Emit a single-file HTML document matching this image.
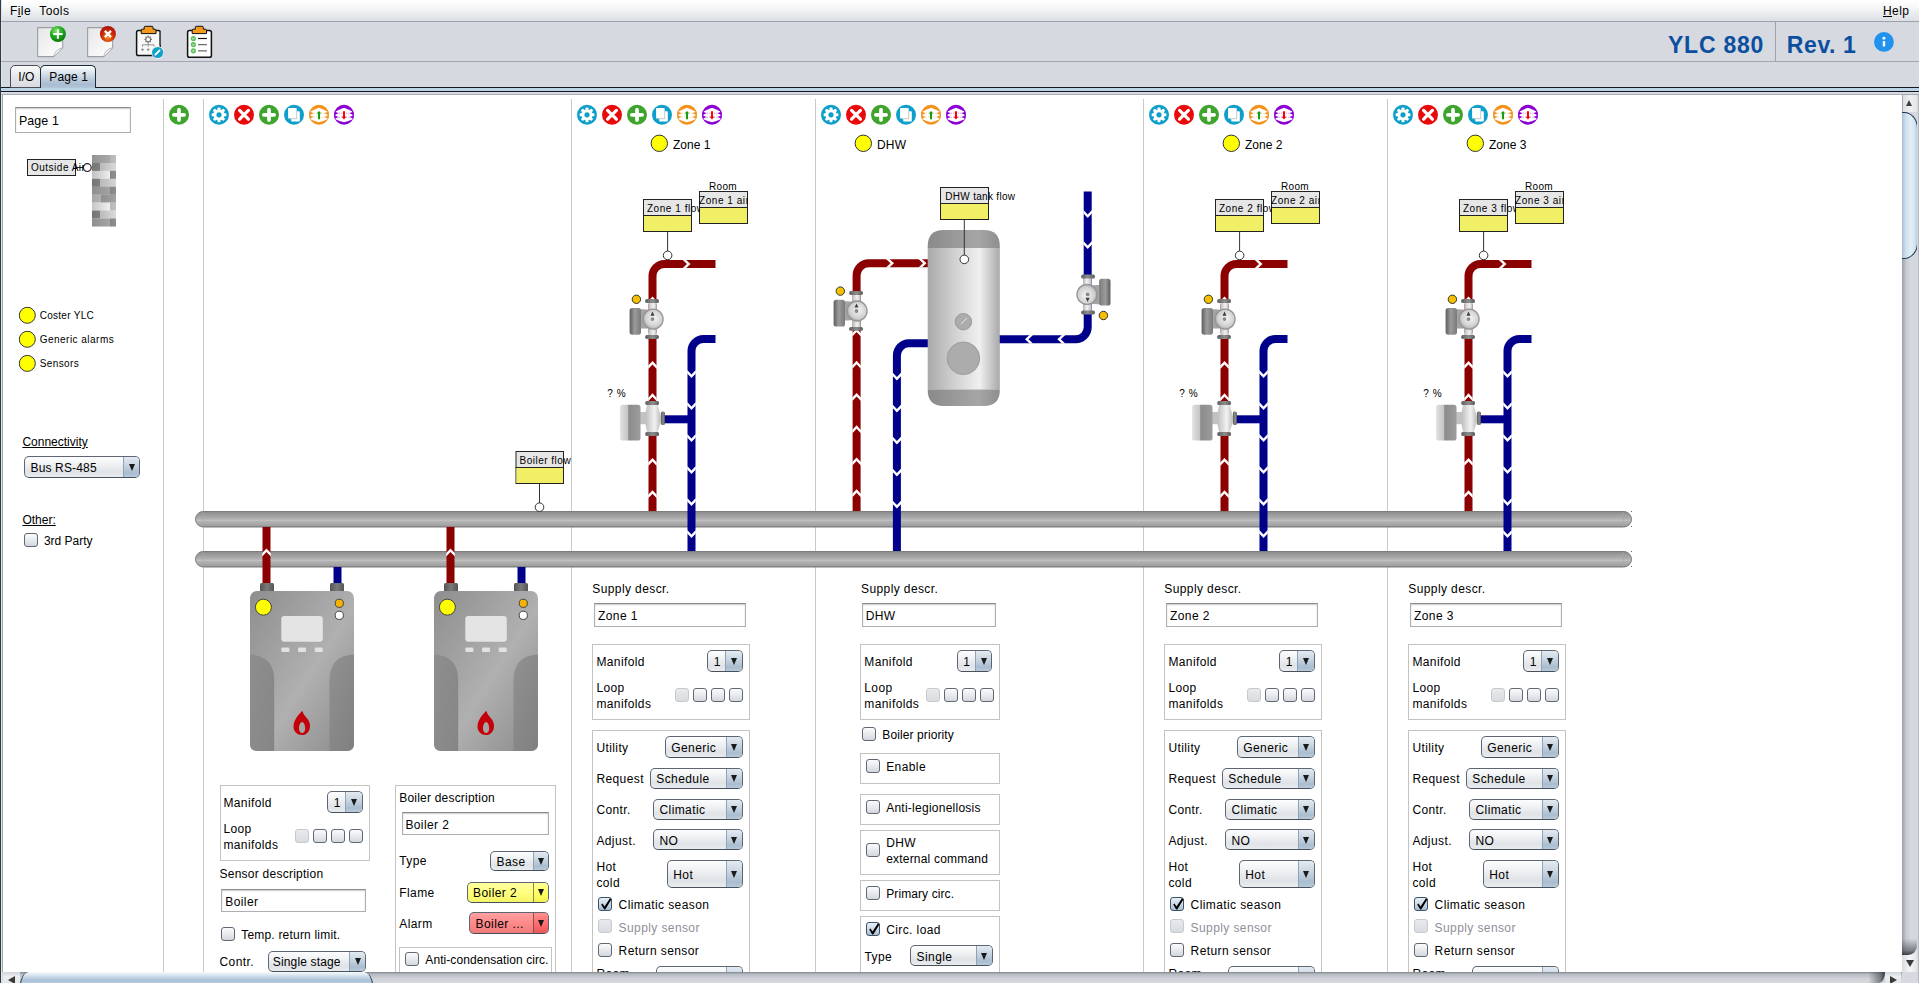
<!DOCTYPE html>
<html><head><meta charset="utf-8"><title>YLC 880</title><style>
*{margin:0;padding:0;box-sizing:border-box}
html,body{width:1919px;height:983px;overflow:hidden;background:#d6d9df;font-family:"Liberation Sans", sans-serif}
.t{position:absolute;white-space:nowrap;font-family:"Liberation Sans", sans-serif}
.clip{position:absolute;overflow:hidden}
.tf{position:absolute;background:#fff;border:1px solid #acaeb2;border-top-color:#8a8c90;box-shadow:inset 0 1px 1.5px rgba(0,0,0,0.22)}
.cb{position:absolute;border:1px solid #5d6672;border-bottom-color:#47505b;border-radius:5px;background:linear-gradient(#fdfdfe,#eef0f2 40%,#dfe2e6 75%,#e9ecef);overflow:hidden}
.cb .ca{position:absolute;top:0;bottom:0;border-left:1px solid #8fa3b8;background:linear-gradient(#e3eaf1,#c9d6e2 40%,#a9bdd0 80%,#b7cadb)}
.cby{background:linear-gradient(#ffffa0,#ffff80 50%,#f4f466)}
.cby .ca{background:linear-gradient(#ffff90,#ffff60 60%,#f0f050);border-left-color:#8a8a50}
.cbr{background:linear-gradient(#ffa0a0,#ff8a8a 50%,#f07a7a)}
.cbr .ca{background:linear-gradient(#ff9090,#ff6868 60%,#e85a5a);border-left-color:#8a5050}
.cb .tri{position:absolute;width:0;height:0;border-left:3.8px solid transparent;border-right:3.8px solid transparent;border-top:7px solid #1a1a1a}
.ck{position:absolute;width:14px;height:14px;border:1.4px solid #5f6873;border-radius:3px;background:linear-gradient(#fafbfc,#e4e7eb 60%,#d3d8de)}
.ckc{background:linear-gradient(#e9eff5,#c7d5e2 60%,#a9bed2);border-color:#3f5368}
.ckd{border-color:#c6cacf;background:linear-gradient(#e8eaed,#d8dbdf)}
.grp{position:absolute;border:1px solid #c3c3c3}
.tab{position:absolute;border:1px solid;border-radius:5px 5px 0 0}
</style></head>
<body>
<div style="position:absolute;left:0;top:0;width:1919px;height:21px;background:linear-gradient(#ffffff 0%,#f6f7f8 35%,#dcdfe4 100%)"></div><div style="position:absolute;left:1px;top:0;width:1px;height:983px;background:#e2e5e9"></div><div style="position:absolute;left:0;top:21px;width:1919px;height:1px;background:#9da2aa"></div><div class="t" style="left:10px;top:5.140000000000001px;font-size:12px;line-height:13.799999999999999px;color:#000;font-weight:normal;letter-spacing:0.4px;">F<u style="text-decoration-thickness:1px;text-underline-offset:1px">i</u>le</div><div class="t" style="left:39.3px;top:5.140000000000001px;font-size:12px;line-height:13.799999999999999px;color:#000;font-weight:normal;letter-spacing:0.4px;">Tools</div><div class="t" style="left:1883px;top:5.440000000000001px;font-size:12px;line-height:13.799999999999999px;color:#000;font-weight:normal;letter-spacing:0.4px;"><u style="text-decoration-thickness:1px;text-underline-offset:1px">H</u>elp</div><div style="position:absolute;left:0;top:61px;width:1919px;height:1px;background:#a3a7af"></div><div style="position:absolute;left:1775px;top:22px;width:1px;height:39px;background:#9ea3ab"></div><div class="t" style="left:1668px;top:31.58px;font-size:23px;line-height:26.45px;color:#0b4f9e;font-weight:bold;letter-spacing:0.75px;">YLC 880</div><div class="t" style="left:1786.8px;top:31.58px;font-size:23px;line-height:26.45px;color:#0b4f9e;font-weight:bold;letter-spacing:0.6px;">Rev. 1</div><svg style="position:absolute;left:1873px;top:32px" width="22" height="22"><circle cx="10.95" cy="9.96" r="9.9" fill="#2193ee"/><circle cx="10.95" cy="6.3" r="1.45" fill="#fff"/><rect x="9.75" y="9.1" width="2.4" height="5.4" fill="#fff"/></svg><svg style="position:absolute;left:30px;top:22px" width="190" height="40">
 <defs>
  <linearGradient id="pg" x1="0" y1="0" x2="1" y2="1"><stop offset="0" stop-color="#e6e6e6"/><stop offset="1" stop-color="#ffffff"/></linearGradient>
  <radialGradient id="gball" cx="0.4" cy="0.3" r="0.7"><stop offset="0" stop-color="#8ce36a"/><stop offset="0.5" stop-color="#24b024"/><stop offset="1" stop-color="#0a7a0a"/></radialGradient>
  <radialGradient id="rball" cx="0.5" cy="0.7" r="0.7"><stop offset="0" stop-color="#f2941a"/><stop offset="0.55" stop-color="#cc2a0a"/><stop offset="1" stop-color="#a80f0f"/></radialGradient>
 </defs>
 <g transform="translate(-30,-22)">
  <path d="M37.6,27.6 H59 L62.7,31 V47.6 L53.8,56.6 H37.6 Z" fill="url(#pg)" stroke="#9c9ea2" stroke-width="1.1" stroke-linejoin="round"/>
  <path d="M53.8,56.6 Q54.5,50 62.7,47.6" fill="#f6f6f6" stroke="#a8a8a8" stroke-width="0.8"/>
  <circle cx="57.9" cy="34" r="8" fill="url(#gball)"/>
  <path d="M53.2,34 H62.6 M57.9,29.3 V38.7" stroke="#fff" stroke-width="2"/>
  <path d="M87.6,27.6 H109 L112.7,31 V47.6 L103.8,56.6 H87.6 Z" fill="url(#pg)" stroke="#9c9ea2" stroke-width="1.1" stroke-linejoin="round"/>
  <path d="M103.8,56.6 Q104.5,50 112.7,47.6" fill="#f6f6f6" stroke="#a8a8a8" stroke-width="0.8"/>
  <circle cx="107.9" cy="34" r="8" fill="url(#rball)"/>
  <path d="M104.8,30.9 L111,37.1 M111,30.9 L104.8,37.1" stroke="#fff" stroke-width="2.2"/>
  <rect x="136.6" y="30.6" width="23.6" height="25" rx="1.8" fill="#f8f8f8" stroke="#111" stroke-width="1.5"/>
  <path d="M160.2,31.5 V45" stroke="#555" stroke-width="1.5"/>
  <path d="M141.2,33.6 V30.2 Q141.2,29.2 142.2,29.2 H144.2 V27.2 Q144.2,26.3 145.2,26.3 H152 Q153,26.3 153,27.2 V29.2 H155 Q156,29.2 156,30.2 V33.6 Z" fill="#f39a1e" stroke="#111" stroke-width="1"/>
  <g transform="translate(148.2,39.4)">
   <circle r="2.9" fill="#777"/>
   <path d="M0,-3.8 V3.8 M-3.8,0 H3.8 M-2.7,-2.7 L2.7,2.7 M2.7,-2.7 L-2.7,2.7" stroke="#777" stroke-width="1.1"/>
   <circle r="1.8" fill="#fff"/>
  </g>
  <path d="M148.2,42.6 V46.6 M142.5,46.8 V44.8 H154 V46.6" stroke="#888" stroke-width="0.9" fill="none"/>
  <circle cx="142.5" cy="49.6" r="1.2" fill="#888"/><circle cx="148.2" cy="49.6" r="1.2" fill="#888"/>
  <circle cx="157.6" cy="52.5" r="6.4" fill="#f4f4f4" opacity="0.85"/>
  <circle cx="157.6" cy="52.5" r="5.6" fill="#12a0cc"/>
  <path d="M155.4,54.7 L159.6,50.4" stroke="#fff" stroke-width="1.8" stroke-linecap="round"/>
  <rect x="187.6" y="30.6" width="23.8" height="26.6" rx="1.8" fill="#fff" stroke="#111" stroke-width="1.5"/>
  <path d="M192.2,33.6 V30.2 Q192.2,29.2 193.2,29.2 H195.3 V27.2 Q195.3,26.3 196.3,26.3 H202.3 Q203.3,26.3 203.3,27.2 V29.2 H205.5 Q206.5,29.2 206.5,30.2 V33.6 Z" fill="#f39a1e" stroke="#111" stroke-width="1"/>
  <circle cx="193.4" cy="38.5" r="2.6" fill="#5cbf5c"/><circle cx="193.4" cy="44.6" r="2.6" fill="#5cbf5c"/><circle cx="193.4" cy="50.8" r="2.6" fill="#5cbf5c"/>
  <path d="M192.3,38.2 L193.2,39.4 L194.6,37.6 M192.3,44.3 L193.2,45.5 L194.6,43.7 M192.3,50.5 L193.2,51.7 L194.6,49.9" stroke="#fff" stroke-width="0.7" fill="none"/>
  <path d="M198,38.5 H206.9" stroke="#111" stroke-width="1.2"/>
  <path d="M198,44.6 H206.9 M198,50.8 H206.9" stroke="#6a6a6a" stroke-width="1.2"/>
 </g>
</svg><div style="position:absolute;left:0;top:87px;width:1919px;height:1px;background:#111a22"></div><div style="position:absolute;left:0;top:88px;width:1919px;height:3px;background:#bcd2e6"></div><div style="position:absolute;left:0;top:91px;width:1919px;height:1px;background:#0f1720"></div><div style="position:absolute;left:0;top:94px;width:1919px;height:1px;background:#a9adb5"></div><div class="tab" style="left:10px;top:65px;width:31px;height:23px;border-color:#4a4f55;background:linear-gradient(#fbfbfc,#e6e7ea 50%,#d9dbdf)"></div><div class="tab" style="left:40px;top:65px;width:56px;height:23px;border-color:#1c2c3c;border-bottom:none;background:linear-gradient(#ffffff,#e2e9f0 25%,#bccbdb 60%,#a9bcd0 85%,#b2c7db)"></div><div class="t" style="left:18.3px;top:70.94px;font-size:12px;line-height:13.799999999999999px;color:#000;font-weight:normal;letter-spacing:0px;">I/O</div><div class="t" style="left:49.3px;top:70.94px;font-size:12px;line-height:13.799999999999999px;color:#000;font-weight:normal;letter-spacing:0.1px;">Page 1</div><div style="position:absolute;left:2px;top:95px;width:1900px;height:877px;background:#fff"></div><div style="position:absolute;left:2px;top:95px;width:1px;height:877px;background:#a2a8b0"></div>
<div id="content" style="position:absolute;left:0;top:0;width:1919px;height:983px;clip-path:inset(95px 17px 11px 3px)">
<svg style="position:absolute;left:0;top:0" width="1919" height="983" viewBox="0 0 1919 983">

<defs>
 <linearGradient id="manif" x1="0" y1="0" x2="0" y2="1">
  <stop offset="0" stop-color="#8a8a8a"/><stop offset="0.15" stop-color="#979797"/>
  <stop offset="0.5" stop-color="#b2b2b2"/><stop offset="0.56" stop-color="#c6c6c6"/>
  <stop offset="0.62" stop-color="#b4b4b4"/><stop offset="0.9" stop-color="#a2a2a2"/><stop offset="1" stop-color="#808080"/>
 </linearGradient>
 <linearGradient id="tankg" x1="0" y1="0" x2="1" y2="0">
  <stop offset="0" stop-color="#a9a9a9"/><stop offset="0.35" stop-color="#cfcfcf"/>
  <stop offset="0.72" stop-color="#f0f0f0"/><stop offset="1" stop-color="#a8a8a8"/>
 </linearGradient>
 <linearGradient id="tankcap" x1="0" y1="0" x2="1" y2="0">
  <stop offset="0" stop-color="#8a8a8a"/><stop offset="0.7" stop-color="#a6a6a6"/><stop offset="1" stop-color="#8e8e8e"/>
 </linearGradient>
 <linearGradient id="boilg" x1="0" y1="0" x2="1" y2="1">
  <stop offset="0" stop-color="#8e8e8e"/><stop offset="0.55" stop-color="#b0b0b0"/><stop offset="1" stop-color="#8a8a8a"/>
 </linearGradient>
 <linearGradient id="boilside" x1="0" y1="0" x2="1" y2="1">
  <stop offset="0" stop-color="#8c8c8c"/><stop offset="1" stop-color="#7e7e7e"/>
 </linearGradient>
 <linearGradient id="conn" x1="0" y1="0" x2="1" y2="0">
  <stop offset="0" stop-color="#555"/><stop offset="0.5" stop-color="#7a7a7a"/><stop offset="1" stop-color="#555"/>
 </linearGradient>
 <linearGradient id="pumpbody" x1="0" y1="0" x2="1" y2="0">
  <stop offset="0" stop-color="#bdbdbd"/><stop offset="0.6" stop-color="#f2f2f2"/><stop offset="1" stop-color="#bcbcbc"/>
 </linearGradient>
 <radialGradient id="pumpcirc" cx="0.55" cy="0.45" r="0.6">
  <stop offset="0" stop-color="#f4f4f4"/><stop offset="0.7" stop-color="#d0d0d0"/><stop offset="1" stop-color="#9a9a9a"/>
 </radialGradient>
 <linearGradient id="motor" x1="0" y1="0" x2="1" y2="0">
  <stop offset="0" stop-color="#5e5e5e"/><stop offset="0.45" stop-color="#9c9c9c"/><stop offset="1" stop-color="#7a7a7a"/>
 </linearGradient>
 <linearGradient id="flange" x1="0" y1="0" x2="1" y2="0">
  <stop offset="0" stop-color="#5e5e5e"/><stop offset="0.55" stop-color="#8e8e8e"/><stop offset="1" stop-color="#5a5a5a"/>
 </linearGradient>
 <linearGradient id="vmotor" x1="0" y1="0" x2="1" y2="0">
  <stop offset="0" stop-color="#e2e2e2"/><stop offset="0.38" stop-color="#c4c4c4"/><stop offset="0.42" stop-color="#8c8c8c"/><stop offset="1" stop-color="#9c9c9c"/>
 </linearGradient>
 <g id="ic-gear">
  <circle r="10" fill="#0d9fc9"/>
  <g fill="#fff">
   <circle r="5.6"/>
   <rect x="-1.5" y="-7.4" width="3" height="3.2" rx="0.8"/>
   <rect x="-1.5" y="4.2" width="3" height="3.2" rx="0.8"/>
   <rect x="-7.4" y="-1.5" width="3.2" height="3" rx="0.8"/>
   <rect x="4.2" y="-1.5" width="3.2" height="3" rx="0.8"/>
   <g transform="rotate(45)">
    <rect x="-1.5" y="-7.4" width="3" height="3.2" rx="0.8"/>
    <rect x="-1.5" y="4.2" width="3" height="3.2" rx="0.8"/>
    <rect x="-7.4" y="-1.5" width="3.2" height="3" rx="0.8"/>
    <rect x="4.2" y="-1.5" width="3.2" height="3" rx="0.8"/>
   </g>
  </g>
  <circle r="2.6" fill="#0d9fc9"/>
 </g>
 <g id="ic-x">
  <circle r="10" fill="#e90b0b"/>
  <path d="M-4.4,-4.4 L4.4,4.4 M4.4,-4.4 L-4.4,4.4" stroke="#fff" stroke-width="3.2" stroke-linecap="round"/>
 </g>
 <g id="ic-plus">
  <circle r="10" fill="#3ea42b"/>
  <path d="M-5.1,0 H5.1 M0,-5.1 V5.1" stroke="#fff" stroke-width="3.7" stroke-linecap="round"/>
 </g>
 <g id="ic-copy">
  <circle r="10" fill="#0d9fc9"/>
  <rect x="-2.8" y="-3.6" width="8.6" height="10.4" rx="0.8" fill="#fff"/>
  <rect x="-5.9" y="-6.7" width="8.6" height="10.5" rx="0.6" fill="#fff"/>
  <path d="M2.7,-4 V3.8 H-4" stroke="#cfcfcf" stroke-width="1.2" fill="none"/>
 </g>
 <g id="ic-lay">
  <path d="M-8.3,-3.4 Q-4.5,-5.6 0,-7.1 Q4.5,-5.6 8.3,-3.4 L8.6,4.4 Q4.5,6.4 0,7.4 Q-4.5,6.4 -8.6,4.4 Z" fill="#fff"/>
 </g>
 <g id="ic-up">
  <circle r="10" fill="#f39118"/>
  <use href="#ic-lay"/>
  <path d="M-9.5,-3.4 L-5.3,-1.6 L-9.5,0.2 Z M9.5,-3.4 L5.3,-1.6 L9.5,0.2 Z M-9.5,0.6 L-5.3,2.3 L-9.5,4 Z M9.5,0.6 L5.3,2.3 L9.5,4 Z" fill="#f39118"/>
  <path d="M-5.3,-1.6 H5.3 M-5.3,2.3 H5.3" stroke="#f39118" stroke-width="0.7" stroke-dasharray="1.2 1.2" opacity="0.6"/>
  <path d="M0,-3.8 L-2.3,-1.2 H-1 V4.4 H1 V-1.2 H2.3 Z" fill="#12a012"/>
 </g>
 <g id="ic-down">
  <circle r="10" fill="#8b00d3"/>
  <use href="#ic-lay"/>
  <path d="M-9.5,-3.4 L-5.3,-1.6 L-9.5,0.2 Z M9.5,-3.4 L5.3,-1.6 L9.5,0.2 Z M-9.5,0.6 L-5.3,2.3 L-9.5,4 Z M9.5,0.6 L5.3,2.3 L9.5,4 Z" fill="#8b00d3"/>
  <path d="M-5.3,-1.6 H5.3 M-5.3,2.3 H5.3" stroke="#8b00d3" stroke-width="0.7" stroke-dasharray="1.2 1.2" opacity="0.6"/>
  <path d="M0,4.6 L-2.3,1.9 H-1 V-3.6 H1 V1.9 H2.3 Z" fill="#f00"/>
 </g>
</defs>

<rect x="163" y="99" width="1" height="880" fill="#c9c9c9"/><rect x="203" y="99" width="1" height="880" fill="#c9c9c9"/><rect x="571" y="99" width="1" height="880" fill="#c9c9c9"/><rect x="815" y="99" width="1" height="880" fill="#c9c9c9"/><rect x="1143" y="99" width="1" height="880" fill="#c9c9c9"/><rect x="1387" y="99" width="1" height="880" fill="#c9c9c9"/><use href="#ic-plus" x="179" y="114.8"/><use href="#ic-gear" x="219" y="114.8"/><use href="#ic-x" x="244" y="114.8"/><use href="#ic-plus" x="269" y="114.8"/><use href="#ic-copy" x="294" y="114.8"/><use href="#ic-up" x="319" y="114.8"/><use href="#ic-down" x="344" y="114.8"/><use href="#ic-gear" x="587" y="114.8"/><use href="#ic-x" x="612" y="114.8"/><use href="#ic-plus" x="637" y="114.8"/><use href="#ic-copy" x="662" y="114.8"/><use href="#ic-up" x="687" y="114.8"/><use href="#ic-down" x="712" y="114.8"/><use href="#ic-gear" x="831" y="114.8"/><use href="#ic-x" x="856" y="114.8"/><use href="#ic-plus" x="881" y="114.8"/><use href="#ic-copy" x="906" y="114.8"/><use href="#ic-up" x="931" y="114.8"/><use href="#ic-down" x="956" y="114.8"/><use href="#ic-gear" x="1159" y="114.8"/><use href="#ic-x" x="1184" y="114.8"/><use href="#ic-plus" x="1209" y="114.8"/><use href="#ic-copy" x="1234" y="114.8"/><use href="#ic-up" x="1259" y="114.8"/><use href="#ic-down" x="1284" y="114.8"/><use href="#ic-gear" x="1403" y="114.8"/><use href="#ic-x" x="1428" y="114.8"/><use href="#ic-plus" x="1453" y="114.8"/><use href="#ic-copy" x="1478" y="114.8"/><use href="#ic-up" x="1503" y="114.8"/><use href="#ic-down" x="1528" y="114.8"/><rect x="195.5" y="511.5" width="1436" height="15.5" rx="7.75" fill="url(#manif)" stroke="#7c7c7c" stroke-width="1"/><line x1="203.5" y1="512" x2="203.5" y2="526.5" stroke="#a6a6a6" stroke-width="1" opacity="0.6"/><line x1="1623.5" y1="512" x2="1623.5" y2="526.5" stroke="#a6a6a6" stroke-width="1" opacity="0.6"/><rect x="1631" y="511" width="1" height="1" fill="#666"/><rect x="1631" y="526" width="1" height="1" fill="#666"/><rect x="195.5" y="551.5" width="1436" height="15.5" rx="7.75" fill="url(#manif)" stroke="#7c7c7c" stroke-width="1"/><line x1="203.5" y1="552" x2="203.5" y2="566.5" stroke="#a6a6a6" stroke-width="1" opacity="0.6"/><line x1="1623.5" y1="552" x2="1623.5" y2="566.5" stroke="#a6a6a6" stroke-width="1" opacity="0.6"/><rect x="1631" y="551" width="1" height="1" fill="#666"/><rect x="1631" y="566" width="1" height="1" fill="#666"/><circle cx="659.3" cy="143.3" r="8.2" fill="#ffff00" stroke="#333" stroke-width="1"/><rect x="643.5" y="199.5" width="48" height="32" fill="#e6e6e6" stroke="#222" stroke-width="1"/><rect x="644" y="216" width="47" height="15" fill="#f0ef66"/><line x1="643" y1="215.5" x2="692" y2="215.5" stroke="#222" stroke-width="1"/><rect x="699.5" y="191.5" width="48" height="32" fill="#e6e6e6" stroke="#222" stroke-width="1"/><rect x="700" y="208" width="47" height="15" fill="#f0ef66"/><line x1="699" y1="207.5" x2="748" y2="207.5" stroke="#222" stroke-width="1"/><line x1="667.6" y1="231" x2="667.6" y2="251" stroke="#333" stroke-width="1"/><path d="M652.5,511 V276 A12,12 0 0 1 664.5,264 H715.5" stroke="#8b0000" stroke-width="8" fill="none" stroke-linejoin="round"/><path d="M648.2,301.0 L652.5,296.4 L656.8,301.0 L656.8,304.4 L652.5,299.9 L648.2,304.4 Z" fill="#fff"/><path d="M648.2,333.3 L652.5,328.7 L656.8,333.3 L656.8,336.7 L652.5,332.2 L648.2,336.7 Z" fill="#fff"/><path d="M648.2,365.6 L652.5,361 L656.8,365.6 L656.8,369 L652.5,364.5 L648.2,369 Z" fill="#fff"/><path d="M648.2,397.90000000000003 L652.5,393.3 L656.8,397.90000000000003 L656.8,401.3 L652.5,396.8 L648.2,401.3 Z" fill="#fff"/><path d="M648.2,430.20000000000005 L652.5,425.6 L656.8,430.20000000000005 L656.8,433.6 L652.5,429.1 L648.2,433.6 Z" fill="#fff"/><path d="M648.2,462.5 L652.5,457.9 L656.8,462.5 L656.8,465.9 L652.5,461.4 L648.2,465.9 Z" fill="#fff"/><path d="M648.2,494.8 L652.5,490.2 L656.8,494.8 L656.8,498.2 L652.5,493.7 L648.2,498.2 Z" fill="#fff"/><path d="M685.9,259.7 L690.5,264 L685.9,268.3 L682.5,268.3 L687.0,264 L682.5,259.7 Z" fill="#fff"/><circle cx="667.6" cy="255.4" r="4.3" fill="#fff" stroke="#333" stroke-width="1"/><path d="M691.5,551 V351 A12,12 0 0 1 703.5,339 H715.5" stroke="#00008b" stroke-width="8" fill="none" stroke-linejoin="round"/><path d="M664,419.3 H691.5" stroke="#00008b" stroke-width="8" fill="none" stroke-linejoin="round"/><path d="M687.2,373.4 L691.5,378 L695.8,373.4 L695.8,370 L691.5,374.5 L687.2,370 Z" fill="#fff"/><path d="M687.2,405.4 L691.5,410 L695.8,405.4 L695.8,402 L691.5,406.5 L687.2,402 Z" fill="#fff"/><path d="M687.2,437.4 L691.5,442 L695.8,437.4 L695.8,434 L691.5,438.5 L687.2,434 Z" fill="#fff"/><path d="M687.2,469.4 L691.5,474 L695.8,469.4 L695.8,466 L691.5,470.5 L687.2,466 Z" fill="#fff"/><path d="M687.2,501.4 L691.5,506 L695.8,501.4 L695.8,498 L691.5,502.5 L687.2,498 Z" fill="#fff"/><path d="M687.2,533.4 L691.5,538 L695.8,533.4 L695.8,530 L691.5,534.5 L687.2,530 Z" fill="#fff"/><g transform="translate(652.5,318.9)"><rect x="-4" y="-17" width="8" height="34" fill="url(#pumpbody)"/><rect x="-7.3" y="-19.8" width="13.7" height="3.9" rx="1.6" fill="url(#flange)"/><rect x="-7.3" y="16.1" width="13.7" height="3.9" rx="1.6" fill="url(#flange)"/><path d="M-12,-9.6 Q-6,-9.8 -3,-9 L-3,9 Q-6,9.8 -12,9.6 Z" fill="#a4a4a4"/><rect x="-22.9" y="-11" width="11.4" height="26.8" rx="2.6" fill="url(#motor)"/><circle cx="0.6" cy="0.2" r="10" fill="url(#pumpcirc)" stroke="#959595" stroke-width="1.3"/><path d="M-2,-3.2 L2,-3.2 L0,-7.4 Z" fill="#3c3c3c"/><circle cx="0" cy="0.2" r="1.9" fill="#8a8a8a"/></g><circle cx="636.4" cy="299.3" r="4.2" fill="#f6c000" stroke="#333" stroke-width="1"/><g transform="translate(652.5,419.3)"><rect x="-12.5" y="-7.3" width="7" height="12.2" fill="#c2c2c2"/><path d="M-5.4,-14.4 L5.3,-14.4 L8.3,-3 L8.3,2.5 L5.3,12.8 L-5.4,12.8 L-7.3,3.8 L-7.3,-5 Z" fill="url(#pumpbody)"/><rect x="-7.2" y="-18.2" width="13.7" height="3.8" rx="1.5" fill="url(#flange)"/><rect x="-7.2" y="12.8" width="13.7" height="3.8" rx="1.5" fill="url(#flange)"/><rect x="8.4" y="-7.8" width="4" height="13.5" rx="1.5" fill="url(#flange)"/><rect x="-32.4" y="-14.6" width="20.4" height="35.8" rx="2.6" fill="url(#vmotor)"/></g><circle cx="1231.3" cy="143.3" r="8.2" fill="#ffff00" stroke="#333" stroke-width="1"/><rect x="1215.5" y="199.5" width="48" height="32" fill="#e6e6e6" stroke="#222" stroke-width="1"/><rect x="1216" y="216" width="47" height="15" fill="#f0ef66"/><line x1="1215" y1="215.5" x2="1264" y2="215.5" stroke="#222" stroke-width="1"/><rect x="1271.5" y="191.5" width="48" height="32" fill="#e6e6e6" stroke="#222" stroke-width="1"/><rect x="1272" y="208" width="47" height="15" fill="#f0ef66"/><line x1="1271" y1="207.5" x2="1320" y2="207.5" stroke="#222" stroke-width="1"/><line x1="1239.6" y1="231" x2="1239.6" y2="251" stroke="#333" stroke-width="1"/><path d="M1224.5,511 V276 A12,12 0 0 1 1236.5,264 H1287.5" stroke="#8b0000" stroke-width="8" fill="none" stroke-linejoin="round"/><path d="M1220.2,301.0 L1224.5,296.4 L1228.8,301.0 L1228.8,304.4 L1224.5,299.9 L1220.2,304.4 Z" fill="#fff"/><path d="M1220.2,333.3 L1224.5,328.7 L1228.8,333.3 L1228.8,336.7 L1224.5,332.2 L1220.2,336.7 Z" fill="#fff"/><path d="M1220.2,365.6 L1224.5,361 L1228.8,365.6 L1228.8,369 L1224.5,364.5 L1220.2,369 Z" fill="#fff"/><path d="M1220.2,397.90000000000003 L1224.5,393.3 L1228.8,397.90000000000003 L1228.8,401.3 L1224.5,396.8 L1220.2,401.3 Z" fill="#fff"/><path d="M1220.2,430.20000000000005 L1224.5,425.6 L1228.8,430.20000000000005 L1228.8,433.6 L1224.5,429.1 L1220.2,433.6 Z" fill="#fff"/><path d="M1220.2,462.5 L1224.5,457.9 L1228.8,462.5 L1228.8,465.9 L1224.5,461.4 L1220.2,465.9 Z" fill="#fff"/><path d="M1220.2,494.8 L1224.5,490.2 L1228.8,494.8 L1228.8,498.2 L1224.5,493.7 L1220.2,498.2 Z" fill="#fff"/><path d="M1257.9,259.7 L1262.5,264 L1257.9,268.3 L1254.5,268.3 L1259.0,264 L1254.5,259.7 Z" fill="#fff"/><circle cx="1239.6" cy="255.4" r="4.3" fill="#fff" stroke="#333" stroke-width="1"/><path d="M1263.5,551 V351 A12,12 0 0 1 1275.5,339 H1287.5" stroke="#00008b" stroke-width="8" fill="none" stroke-linejoin="round"/><path d="M1236,419.3 H1263.5" stroke="#00008b" stroke-width="8" fill="none" stroke-linejoin="round"/><path d="M1259.2,373.4 L1263.5,378 L1267.8,373.4 L1267.8,370 L1263.5,374.5 L1259.2,370 Z" fill="#fff"/><path d="M1259.2,405.4 L1263.5,410 L1267.8,405.4 L1267.8,402 L1263.5,406.5 L1259.2,402 Z" fill="#fff"/><path d="M1259.2,437.4 L1263.5,442 L1267.8,437.4 L1267.8,434 L1263.5,438.5 L1259.2,434 Z" fill="#fff"/><path d="M1259.2,469.4 L1263.5,474 L1267.8,469.4 L1267.8,466 L1263.5,470.5 L1259.2,466 Z" fill="#fff"/><path d="M1259.2,501.4 L1263.5,506 L1267.8,501.4 L1267.8,498 L1263.5,502.5 L1259.2,498 Z" fill="#fff"/><path d="M1259.2,533.4 L1263.5,538 L1267.8,533.4 L1267.8,530 L1263.5,534.5 L1259.2,530 Z" fill="#fff"/><g transform="translate(1224.5,318.9)"><rect x="-4" y="-17" width="8" height="34" fill="url(#pumpbody)"/><rect x="-7.3" y="-19.8" width="13.7" height="3.9" rx="1.6" fill="url(#flange)"/><rect x="-7.3" y="16.1" width="13.7" height="3.9" rx="1.6" fill="url(#flange)"/><path d="M-12,-9.6 Q-6,-9.8 -3,-9 L-3,9 Q-6,9.8 -12,9.6 Z" fill="#a4a4a4"/><rect x="-22.9" y="-11" width="11.4" height="26.8" rx="2.6" fill="url(#motor)"/><circle cx="0.6" cy="0.2" r="10" fill="url(#pumpcirc)" stroke="#959595" stroke-width="1.3"/><path d="M-2,-3.2 L2,-3.2 L0,-7.4 Z" fill="#3c3c3c"/><circle cx="0" cy="0.2" r="1.9" fill="#8a8a8a"/></g><circle cx="1208.4" cy="299.3" r="4.2" fill="#f6c000" stroke="#333" stroke-width="1"/><g transform="translate(1224.5,419.3)"><rect x="-12.5" y="-7.3" width="7" height="12.2" fill="#c2c2c2"/><path d="M-5.4,-14.4 L5.3,-14.4 L8.3,-3 L8.3,2.5 L5.3,12.8 L-5.4,12.8 L-7.3,3.8 L-7.3,-5 Z" fill="url(#pumpbody)"/><rect x="-7.2" y="-18.2" width="13.7" height="3.8" rx="1.5" fill="url(#flange)"/><rect x="-7.2" y="12.8" width="13.7" height="3.8" rx="1.5" fill="url(#flange)"/><rect x="8.4" y="-7.8" width="4" height="13.5" rx="1.5" fill="url(#flange)"/><rect x="-32.4" y="-14.6" width="20.4" height="35.8" rx="2.6" fill="url(#vmotor)"/></g><circle cx="1475.3" cy="143.3" r="8.2" fill="#ffff00" stroke="#333" stroke-width="1"/><rect x="1459.5" y="199.5" width="48" height="32" fill="#e6e6e6" stroke="#222" stroke-width="1"/><rect x="1460" y="216" width="47" height="15" fill="#f0ef66"/><line x1="1459" y1="215.5" x2="1508" y2="215.5" stroke="#222" stroke-width="1"/><rect x="1515.5" y="191.5" width="48" height="32" fill="#e6e6e6" stroke="#222" stroke-width="1"/><rect x="1516" y="208" width="47" height="15" fill="#f0ef66"/><line x1="1515" y1="207.5" x2="1564" y2="207.5" stroke="#222" stroke-width="1"/><line x1="1483.6" y1="231" x2="1483.6" y2="251" stroke="#333" stroke-width="1"/><path d="M1468.5,511 V276 A12,12 0 0 1 1480.5,264 H1531.5" stroke="#8b0000" stroke-width="8" fill="none" stroke-linejoin="round"/><path d="M1464.2,301.0 L1468.5,296.4 L1472.8,301.0 L1472.8,304.4 L1468.5,299.9 L1464.2,304.4 Z" fill="#fff"/><path d="M1464.2,333.3 L1468.5,328.7 L1472.8,333.3 L1472.8,336.7 L1468.5,332.2 L1464.2,336.7 Z" fill="#fff"/><path d="M1464.2,365.6 L1468.5,361 L1472.8,365.6 L1472.8,369 L1468.5,364.5 L1464.2,369 Z" fill="#fff"/><path d="M1464.2,397.90000000000003 L1468.5,393.3 L1472.8,397.90000000000003 L1472.8,401.3 L1468.5,396.8 L1464.2,401.3 Z" fill="#fff"/><path d="M1464.2,430.20000000000005 L1468.5,425.6 L1472.8,430.20000000000005 L1472.8,433.6 L1468.5,429.1 L1464.2,433.6 Z" fill="#fff"/><path d="M1464.2,462.5 L1468.5,457.9 L1472.8,462.5 L1472.8,465.9 L1468.5,461.4 L1464.2,465.9 Z" fill="#fff"/><path d="M1464.2,494.8 L1468.5,490.2 L1472.8,494.8 L1472.8,498.2 L1468.5,493.7 L1464.2,498.2 Z" fill="#fff"/><path d="M1501.9,259.7 L1506.5,264 L1501.9,268.3 L1498.5,268.3 L1503.0,264 L1498.5,259.7 Z" fill="#fff"/><circle cx="1483.6" cy="255.4" r="4.3" fill="#fff" stroke="#333" stroke-width="1"/><path d="M1507.5,551 V351 A12,12 0 0 1 1519.5,339 H1531.5" stroke="#00008b" stroke-width="8" fill="none" stroke-linejoin="round"/><path d="M1480,419.3 H1507.5" stroke="#00008b" stroke-width="8" fill="none" stroke-linejoin="round"/><path d="M1503.2,373.4 L1507.5,378 L1511.8,373.4 L1511.8,370 L1507.5,374.5 L1503.2,370 Z" fill="#fff"/><path d="M1503.2,405.4 L1507.5,410 L1511.8,405.4 L1511.8,402 L1507.5,406.5 L1503.2,402 Z" fill="#fff"/><path d="M1503.2,437.4 L1507.5,442 L1511.8,437.4 L1511.8,434 L1507.5,438.5 L1503.2,434 Z" fill="#fff"/><path d="M1503.2,469.4 L1507.5,474 L1511.8,469.4 L1511.8,466 L1507.5,470.5 L1503.2,466 Z" fill="#fff"/><path d="M1503.2,501.4 L1507.5,506 L1511.8,501.4 L1511.8,498 L1507.5,502.5 L1503.2,498 Z" fill="#fff"/><path d="M1503.2,533.4 L1507.5,538 L1511.8,533.4 L1511.8,530 L1507.5,534.5 L1503.2,530 Z" fill="#fff"/><g transform="translate(1468.5,318.9)"><rect x="-4" y="-17" width="8" height="34" fill="url(#pumpbody)"/><rect x="-7.3" y="-19.8" width="13.7" height="3.9" rx="1.6" fill="url(#flange)"/><rect x="-7.3" y="16.1" width="13.7" height="3.9" rx="1.6" fill="url(#flange)"/><path d="M-12,-9.6 Q-6,-9.8 -3,-9 L-3,9 Q-6,9.8 -12,9.6 Z" fill="#a4a4a4"/><rect x="-22.9" y="-11" width="11.4" height="26.8" rx="2.6" fill="url(#motor)"/><circle cx="0.6" cy="0.2" r="10" fill="url(#pumpcirc)" stroke="#959595" stroke-width="1.3"/><path d="M-2,-3.2 L2,-3.2 L0,-7.4 Z" fill="#3c3c3c"/><circle cx="0" cy="0.2" r="1.9" fill="#8a8a8a"/></g><circle cx="1452.4" cy="299.3" r="4.2" fill="#f6c000" stroke="#333" stroke-width="1"/><g transform="translate(1468.5,419.3)"><rect x="-12.5" y="-7.3" width="7" height="12.2" fill="#c2c2c2"/><path d="M-5.4,-14.4 L5.3,-14.4 L8.3,-3 L8.3,2.5 L5.3,12.8 L-5.4,12.8 L-7.3,3.8 L-7.3,-5 Z" fill="url(#pumpbody)"/><rect x="-7.2" y="-18.2" width="13.7" height="3.8" rx="1.5" fill="url(#flange)"/><rect x="-7.2" y="12.8" width="13.7" height="3.8" rx="1.5" fill="url(#flange)"/><rect x="8.4" y="-7.8" width="4" height="13.5" rx="1.5" fill="url(#flange)"/><rect x="-32.4" y="-14.6" width="20.4" height="35.8" rx="2.6" fill="url(#vmotor)"/></g><circle cx="863.3" cy="143.3" r="8.2" fill="#ffff00" stroke="#333" stroke-width="1"/><path d="M856.6,511 V275.3 A12,12 0 0 1 868.6,263.3 H928" stroke="#8b0000" stroke-width="8" fill="none" stroke-linejoin="round"/><path d="M852.3000000000001,333.20000000000005 L856.6,328.6 L860.9,333.20000000000005 L860.9,336.6 L856.6,332.1 L852.3000000000001,336.6 Z" fill="#fff"/><path d="M852.3000000000001,365.40000000000003 L856.6,360.8 L860.9,365.40000000000003 L860.9,368.8 L856.6,364.3 L852.3000000000001,368.8 Z" fill="#fff"/><path d="M852.3000000000001,397.6 L856.6,393 L860.9,397.6 L860.9,401 L856.6,396.5 L852.3000000000001,401 Z" fill="#fff"/><path d="M852.3000000000001,429.90000000000003 L856.6,425.3 L860.9,429.90000000000003 L860.9,433.3 L856.6,428.8 L852.3000000000001,433.3 Z" fill="#fff"/><path d="M852.3000000000001,462.1 L856.6,457.5 L860.9,462.1 L860.9,465.5 L856.6,461.0 L852.3000000000001,465.5 Z" fill="#fff"/><path d="M852.3000000000001,493.8 L856.6,489.2 L860.9,493.8 L860.9,497.2 L856.6,492.7 L852.3000000000001,497.2 Z" fill="#fff"/><path d="M889.4,259.0 L894,263.3 L889.4,267.6 L886,267.6 L890.5,263.3 L886,259.0 Z" fill="#fff"/><path d="M921.9,259.0 L926.5,263.3 L921.9,267.6 L918.5,267.6 L923.0,263.3 L918.5,259.0 Z" fill="#fff"/><path d="M896.9,551 V355.3 A12,12 0 0 1 908.9,343.3 H928" stroke="#00008b" stroke-width="8" fill="none" stroke-linejoin="round"/><path d="M892.6,375.9 L896.9,380.5 L901.1999999999999,375.9 L901.1999999999999,372.5 L896.9,377.0 L892.6,372.5 Z" fill="#fff"/><path d="M892.6,407.9 L896.9,412.5 L901.1999999999999,407.9 L901.1999999999999,404.5 L896.9,409.0 L892.6,404.5 Z" fill="#fff"/><path d="M892.6,439.9 L896.9,444.5 L901.1999999999999,439.9 L901.1999999999999,436.5 L896.9,441.0 L892.6,436.5 Z" fill="#fff"/><path d="M892.6,471.9 L896.9,476.5 L901.1999999999999,471.9 L901.1999999999999,468.5 L896.9,473.0 L892.6,468.5 Z" fill="#fff"/><path d="M892.6,503.9 L896.9,508.5 L901.1999999999999,503.9 L901.1999999999999,500.5 L896.9,505.0 L892.6,500.5 Z" fill="#fff"/><path d="M999,339.3 H1075.7 A12,12 0 0 0 1087.7,327.3 V191.4" stroke="#00008b" stroke-width="8" fill="none" stroke-linejoin="round"/><path d="M1029.6,335.0 L1025,339.3 L1029.6,343.6 L1033,343.6 L1028.5,339.3 L1033,335.0 Z" fill="#fff"/><path d="M1061.8999999999999,335.0 L1057.3,339.3 L1061.8999999999999,343.6 L1065.3,343.6 L1060.8,339.3 L1065.3,335.0 Z" fill="#fff"/><path d="M1083.4,213.3 L1087.7,217.9 L1092.0,213.3 L1092.0,209.9 L1087.7,214.4 L1083.4,209.9 Z" fill="#fff"/><path d="M1083.4,244.4 L1087.7,249 L1092.0,244.4 L1092.0,241 L1087.7,245.5 L1083.4,241 Z" fill="#fff"/><path d="M927.7,248 V246 Q927.7,230 943.7,230 H983.8 Q999.8,230 999.8,246 V248 Z" fill="url(#tankcap)"/><rect x="927.7" y="248" width="72.1" height="141.6" fill="url(#tankg)"/><path d="M927.7,389.6 V390 Q927.7,406 943.7,406 H983.8 Q999.8,406 999.8,390 V389.6 Z" fill="url(#tankcap)"/><circle cx="963.4" cy="321.7" r="8.2" fill="#acacac" stroke="#9a9a9a" stroke-width="1"/><line x1="960.8" y1="324.3" x2="966.8" y2="318.3" stroke="#e8e8e8" stroke-width="1"/><circle cx="963.4" cy="358.3" r="16.3" fill="#acacac" stroke="#9c9c9c" stroke-width="1"/><rect x="940.5" y="187.5" width="48" height="32" fill="#e6e6e6" stroke="#222" stroke-width="1"/><rect x="941" y="204" width="47" height="15" fill="#f0ef66"/><line x1="940" y1="203.5" x2="989" y2="203.5" stroke="#222" stroke-width="1"/><line x1="964.3" y1="219" x2="964.3" y2="255" stroke="#333" stroke-width="1"/><circle cx="964.3" cy="259.4" r="4.3" fill="#fff" stroke="#333" stroke-width="1"/><g transform="translate(856.5,310.8)"><rect x="-4" y="-17" width="8" height="34" fill="url(#pumpbody)"/><rect x="-7.3" y="-19.8" width="13.7" height="3.9" rx="1.6" fill="url(#flange)"/><rect x="-7.3" y="16.1" width="13.7" height="3.9" rx="1.6" fill="url(#flange)"/><path d="M-12,-9.6 Q-6,-9.8 -3,-9 L-3,9 Q-6,9.8 -12,9.6 Z" fill="#a4a4a4"/><rect x="-22.9" y="-11" width="11.4" height="26.8" rx="2.6" fill="url(#motor)"/><circle cx="0.6" cy="0.2" r="10" fill="url(#pumpcirc)" stroke="#959595" stroke-width="1.3"/><path d="M-2,-3.2 L2,-3.2 L0,-7.4 Z" fill="#3c3c3c"/><circle cx="0" cy="0.2" r="1.9" fill="#8a8a8a"/></g><circle cx="840.3" cy="291.1" r="4.2" fill="#f6c000" stroke="#333" stroke-width="1"/><g transform="translate(1087.6,294.6) rotate(180)"><rect x="-4" y="-17" width="8" height="34" fill="url(#pumpbody)"/><rect x="-7.3" y="-19.8" width="13.7" height="3.9" rx="1.6" fill="url(#flange)"/><rect x="-7.3" y="16.1" width="13.7" height="3.9" rx="1.6" fill="url(#flange)"/><path d="M-12,-9.6 Q-6,-9.8 -3,-9 L-3,9 Q-6,9.8 -12,9.6 Z" fill="#a4a4a4"/><rect x="-22.9" y="-11" width="11.4" height="26.8" rx="2.6" fill="url(#motor)"/><circle cx="0.6" cy="0.2" r="10" fill="url(#pumpcirc)" stroke="#959595" stroke-width="1.3"/><path d="M-2,-3.2 L2,-3.2 L0,-7.4 Z" fill="#3c3c3c"/><circle cx="0" cy="0.2" r="1.9" fill="#8a8a8a"/></g><circle cx="1103.4" cy="315.5" r="4.2" fill="#f6c000" stroke="#333" stroke-width="1"/><path d="M266.5,527 V584" stroke="#8b0000" stroke-width="8" fill="none" stroke-linejoin="round"/><path d="M262.2,553.1 L266.5,548.5 L270.8,553.1 L270.8,556.5 L266.5,552.0 L262.2,556.5 Z" fill="#fff"/><path d="M337.5,567 V584" stroke="#00008b" stroke-width="8" fill="none" stroke-linejoin="round"/><rect x="260" y="583" width="14" height="9" rx="1.5" fill="url(#conn)"/><rect x="330" y="583" width="14" height="9" rx="1.5" fill="url(#conn)"/><rect x="250" y="591" width="104" height="160" rx="7" fill="url(#boilg)"/><path d="M250,654.6 H250 Q274.2,656 274.2,680 V751 H257 Q250,751 250,744 Z" fill="url(#boilside)" opacity="0.85"/><path d="M354,654.6 Q329.5,656 329.5,680 V751 H347 Q354,751 354,744 Z" fill="url(#boilside)" opacity="0.85"/><rect x="281.3" y="616" width="41.5" height="25.8" rx="3" fill="#e4e4e4"/><rect x="281.3" y="647.5" width="8.1" height="4.5" rx="1.2" fill="#e2e2e2"/><rect x="298" y="647.5" width="8.1" height="4.5" rx="1.2" fill="#e2e2e2"/><rect x="314.7" y="647.5" width="8.1" height="4.5" rx="1.2" fill="#e2e2e2"/><circle cx="263.4" cy="607.2" r="8" fill="#ffff00" stroke="#444" stroke-width="1"/><circle cx="339.3" cy="603.3" r="4.1" fill="#f6b400" stroke="#444" stroke-width="1"/><circle cx="339.3" cy="615.3" r="4.1" fill="#ffffff" stroke="#444" stroke-width="1"/><path d="M302.40,710.8 C303.00,713.5 304.50,715.5 306.50,717.8 C309.00,720.5 310.00,723 310.00,726.2 C310.00,731.2 306.50,735 302.00,735 C297.50,735 293.50,731.5 293.50,726.5 C293.50,720.5 298.50,714.5 302.40,710.8 Z M302.10,722 C303.80,722 305.20,725 305.20,728.5 C305.20,731.3 303.80,733 302.10,733 C300.40,733 299.00,731.3 299.00,728.5 C299.00,725 300.40,722 302.10,722 Z" fill="#c4000a" fill-rule="evenodd"/><path d="M450.5,527 V584" stroke="#8b0000" stroke-width="8" fill="none" stroke-linejoin="round"/><path d="M446.2,553.1 L450.5,548.5 L454.8,553.1 L454.8,556.5 L450.5,552.0 L446.2,556.5 Z" fill="#fff"/><path d="M521.5,567 V584" stroke="#00008b" stroke-width="8" fill="none" stroke-linejoin="round"/><rect x="444" y="583" width="14" height="9" rx="1.5" fill="url(#conn)"/><rect x="514" y="583" width="14" height="9" rx="1.5" fill="url(#conn)"/><rect x="434" y="591" width="104" height="160" rx="7" fill="url(#boilg)"/><path d="M434,654.6 H434 Q458.2,656 458.2,680 V751 H441 Q434,751 434,744 Z" fill="url(#boilside)" opacity="0.85"/><path d="M538,654.6 Q513.5,656 513.5,680 V751 H531 Q538,751 538,744 Z" fill="url(#boilside)" opacity="0.85"/><rect x="465.3" y="616" width="41.5" height="25.8" rx="3" fill="#e4e4e4"/><rect x="465.3" y="647.5" width="8.1" height="4.5" rx="1.2" fill="#e2e2e2"/><rect x="482" y="647.5" width="8.1" height="4.5" rx="1.2" fill="#e2e2e2"/><rect x="498.7" y="647.5" width="8.1" height="4.5" rx="1.2" fill="#e2e2e2"/><circle cx="447.4" cy="607.2" r="8" fill="#ffff00" stroke="#444" stroke-width="1"/><circle cx="523.3" cy="603.3" r="4.1" fill="#f6b400" stroke="#444" stroke-width="1"/><circle cx="523.3" cy="615.3" r="4.1" fill="#ffffff" stroke="#444" stroke-width="1"/><path d="M486.40,710.8 C487.00,713.5 488.50,715.5 490.50,717.8 C493.00,720.5 494.00,723 494.00,726.2 C494.00,731.2 490.50,735 486.00,735 C481.50,735 477.50,731.5 477.50,726.5 C477.50,720.5 482.50,714.5 486.40,710.8 Z M486.10,722 C487.80,722 489.20,725 489.20,728.5 C489.20,731.3 487.80,733 486.10,733 C484.40,733 483.00,731.3 483.00,728.5 C483.00,725 484.40,722 486.10,722 Z" fill="#c4000a" fill-rule="evenodd"/><rect x="516.0" y="451.5" width="47.5" height="32" fill="#e6e6e6" stroke="#222" stroke-width="1"/><rect x="516.5" y="468" width="46.5" height="15" fill="#f0ef66"/><line x1="515.5" y1="467.5" x2="564.0" y2="467.5" stroke="#222" stroke-width="1"/><line x1="539.5" y1="483.5" x2="539.5" y2="503" stroke="#333" stroke-width="1"/><circle cx="539.5" cy="507.2" r="4.3" fill="#fff" stroke="#333" stroke-width="1"/><rect x="27.5" y="159.5" width="48" height="16" fill="#e6e6e6" stroke="#222" stroke-width="1"/><rect x="92" y="155.00" width="18" height="8.1" fill="url(#bra0)"/><rect x="110" y="155.00" width="6" height="8.1" fill="url(#brb0)"/><rect x="92" y="162.93" width="8.5" height="8.1" fill="url(#bra1)"/><rect x="100.5" y="162.93" width="15.5" height="8.1" fill="url(#brb1)"/><rect x="92" y="170.86" width="18" height="8.1" fill="url(#bra2)"/><rect x="110" y="170.86" width="6" height="8.1" fill="url(#brb2)"/><rect x="92" y="178.79" width="8.5" height="8.1" fill="url(#bra3)"/><rect x="100.5" y="178.79" width="15.5" height="8.1" fill="url(#brb3)"/><rect x="92" y="186.72" width="18" height="8.1" fill="url(#bra4)"/><rect x="110" y="186.72" width="6" height="8.1" fill="url(#brb4)"/><rect x="92" y="194.65" width="8.5" height="8.1" fill="url(#bra5)"/><rect x="100.5" y="194.65" width="15.5" height="8.1" fill="url(#brb5)"/><rect x="92" y="202.58" width="18" height="8.1" fill="url(#bra6)"/><rect x="110" y="202.58" width="6" height="8.1" fill="url(#brb6)"/><rect x="92" y="210.51" width="8.5" height="8.1" fill="url(#bra7)"/><rect x="100.5" y="210.51" width="15.5" height="8.1" fill="url(#brb7)"/><rect x="92" y="218.44" width="18" height="8.1" fill="url(#bra8)"/><rect x="110" y="218.44" width="6" height="8.1" fill="url(#brb8)"/><defs><linearGradient id="bra0"><stop offset="0" stop-color="#939393"/><stop offset="1" stop-color="#a9a9a9"/></linearGradient><linearGradient id="brb0"><stop offset="0" stop-color="#b5b5b5"/><stop offset="1" stop-color="#bdbdbd"/></linearGradient><linearGradient id="bra1"><stop offset="0" stop-color="#757575"/><stop offset="1" stop-color="#808080"/></linearGradient><linearGradient id="brb1"><stop offset="0" stop-color="#bababa"/><stop offset="1" stop-color="#dadada"/></linearGradient><linearGradient id="bra2"><stop offset="0" stop-color="#c2c2c2"/><stop offset="1" stop-color="#eeeeee"/></linearGradient><linearGradient id="brb2"><stop offset="0" stop-color="#858585"/><stop offset="1" stop-color="#8f8f8f"/></linearGradient><linearGradient id="bra3"><stop offset="0" stop-color="#757575"/><stop offset="1" stop-color="#808080"/></linearGradient><linearGradient id="brb3"><stop offset="0" stop-color="#b8b8b8"/><stop offset="1" stop-color="#d6d6d6"/></linearGradient><linearGradient id="bra4"><stop offset="0" stop-color="#8e8e8e"/><stop offset="1" stop-color="#a2a2a2"/></linearGradient><linearGradient id="brb4"><stop offset="0" stop-color="#868686"/><stop offset="1" stop-color="#8e8e8e"/></linearGradient><linearGradient id="bra5"><stop offset="0" stop-color="#a6a6a6"/><stop offset="1" stop-color="#b2b2b2"/></linearGradient><linearGradient id="brb5"><stop offset="0" stop-color="#8e8e8e"/><stop offset="1" stop-color="#a2a2a2"/></linearGradient><linearGradient id="bra6"><stop offset="0" stop-color="#c6c6c6"/><stop offset="1" stop-color="#f0f0f0"/></linearGradient><linearGradient id="brb6"><stop offset="0" stop-color="#b8b8b8"/><stop offset="1" stop-color="#c0c0c0"/></linearGradient><linearGradient id="bra7"><stop offset="0" stop-color="#757575"/><stop offset="1" stop-color="#808080"/></linearGradient><linearGradient id="brb7"><stop offset="0" stop-color="#bababa"/><stop offset="1" stop-color="#dcdcdc"/></linearGradient><linearGradient id="bra8"><stop offset="0" stop-color="#8e8e8e"/><stop offset="1" stop-color="#a6a6a6"/></linearGradient><linearGradient id="brb8"><stop offset="0" stop-color="#868686"/><stop offset="1" stop-color="#8e8e8e"/></linearGradient></defs><line x1="76" y1="167.5" x2="84" y2="167.5" stroke="#222" stroke-width="1"/><circle cx="87.3" cy="167.6" r="3.9" fill="#fff" stroke="#222" stroke-width="1.2"/><circle cx="27.3" cy="315.3" r="8" fill="#ffff00" stroke="#333" stroke-width="1"/><circle cx="27.3" cy="339.3" r="8" fill="#ffff00" stroke="#333" stroke-width="1"/><circle cx="27.3" cy="363.4" r="8" fill="#ffff00" stroke="#333" stroke-width="1"/>
</svg>
<div class="t" style="left:673px;top:138.94px;font-size:12px;line-height:13.799999999999999px;color:#000;font-weight:normal;letter-spacing:0px;">Zone 1</div><div class="t" style="left:709px;top:181.45px;font-size:10px;line-height:11.5px;color:#000;font-weight:normal;letter-spacing:0.3px;">Room</div><div class="t" style="left:607.3px;top:387.84999999999997px;font-size:10px;line-height:11.5px;color:#000;font-weight:normal;letter-spacing:0.5px;">? %</div><div class="t" style="left:1245px;top:138.94px;font-size:12px;line-height:13.799999999999999px;color:#000;font-weight:normal;letter-spacing:0px;">Zone 2</div><div class="t" style="left:1281px;top:181.45px;font-size:10px;line-height:11.5px;color:#000;font-weight:normal;letter-spacing:0.3px;">Room</div><div class="t" style="left:1179.3px;top:387.84999999999997px;font-size:10px;line-height:11.5px;color:#000;font-weight:normal;letter-spacing:0.5px;">? %</div><div class="t" style="left:1489px;top:138.94px;font-size:12px;line-height:13.799999999999999px;color:#000;font-weight:normal;letter-spacing:0px;">Zone 3</div><div class="t" style="left:1525px;top:181.45px;font-size:10px;line-height:11.5px;color:#000;font-weight:normal;letter-spacing:0.3px;">Room</div><div class="t" style="left:1423.3px;top:387.84999999999997px;font-size:10px;line-height:11.5px;color:#000;font-weight:normal;letter-spacing:0.5px;">? %</div><div class="t" style="left:877px;top:138.94px;font-size:12px;line-height:13.799999999999999px;color:#000;font-weight:normal;letter-spacing:0.15px;">DHW</div><div class="t" style="left:31px;top:162.35px;font-size:10px;line-height:11.5px;color:#000;font-weight:normal;letter-spacing:0.5px;">Outside Air</div><div class="t" style="left:39.7px;top:310.34999999999997px;font-size:10px;line-height:11.5px;color:#000;font-weight:normal;letter-spacing:0.28px;">Coster YLC</div><div class="t" style="left:39.7px;top:334.34999999999997px;font-size:10px;line-height:11.5px;color:#000;font-weight:normal;letter-spacing:0.48px;">Generic alarms</div><div class="t" style="left:39.7px;top:358.34999999999997px;font-size:10px;line-height:11.5px;color:#000;font-weight:normal;letter-spacing:0.4px;">Sensors</div><div class="tf" style="left:15px;top:107px;width:116px;height:26px"></div><div class="t" style="left:19px;top:114.18px;font-size:12.4px;line-height:14.26px;color:#000;font-weight:normal;letter-spacing:0.1px;">Page 1</div><div class="t" style="left:22.4px;top:436.14px;font-size:12px;line-height:13.799999999999999px;color:#000;font-weight:normal;letter-spacing:0px;"><u>Connectivity</u></div><div class="cb" style="left:24.4px;top:456.3px;width:116px;height:21.6px"><div class="ca" style="left:98.1px;width:16.400000000000006px"></div><div class="tri" style="left:103.5px;top:6.800000000000001px"></div></div><div class="t" style="left:30.5px;top:461.74px;font-size:12px;line-height:13.799999999999999px;color:#000;font-weight:normal;letter-spacing:0.15px;">Bus RS-485</div><div class="t" style="left:22.4px;top:513.54px;font-size:12px;line-height:13.799999999999999px;color:#000;font-weight:normal;letter-spacing:0px;"><u>Other:</u></div><div class="ck" style="left:24.4px;top:533.00px"></div><div class="t" style="left:43.9px;top:535.14px;font-size:12px;line-height:13.799999999999999px;color:#000;font-weight:normal;letter-spacing:0px;">3rd Party</div><div class="clip" style="left:643px;top:199px;width:57px;height:16px"><div class="t" style="left:3.9px;top:4.25px;font-size:10px;line-height:11.5px;color:#000;font-weight:normal;letter-spacing:0.55px;">Zone 1 flow</div></div><div class="clip" style="left:699px;top:191px;width:49px;height:16px"><div class="t" style="left:0px;top:3.8499999999999996px;font-size:10px;line-height:11.5px;color:#000;font-weight:normal;letter-spacing:0.55px;">Zone 1 air</div></div><div class="clip" style="left:1215px;top:199px;width:57px;height:16px"><div class="t" style="left:3.9px;top:4.25px;font-size:10px;line-height:11.5px;color:#000;font-weight:normal;letter-spacing:0.55px;">Zone 2 flow</div></div><div class="clip" style="left:1271px;top:191px;width:49px;height:16px"><div class="t" style="left:0px;top:3.8499999999999996px;font-size:10px;line-height:11.5px;color:#000;font-weight:normal;letter-spacing:0.55px;">Zone 2 air</div></div><div class="clip" style="left:1459px;top:199px;width:57px;height:16px"><div class="t" style="left:3.9px;top:4.25px;font-size:10px;line-height:11.5px;color:#000;font-weight:normal;letter-spacing:0.55px;">Zone 3 flow</div></div><div class="clip" style="left:1515px;top:191px;width:49px;height:16px"><div class="t" style="left:0px;top:3.8499999999999996px;font-size:10px;line-height:11.5px;color:#000;font-weight:normal;letter-spacing:0.55px;">Zone 3 air</div></div><div class="t" style="left:945.3px;top:190.85px;font-size:10px;line-height:11.5px;color:#000;font-weight:normal;letter-spacing:0.3px;">DHW tank flow</div><div class="t" style="left:519.5px;top:455.15px;font-size:10px;line-height:11.5px;color:#000;font-weight:normal;letter-spacing:0.5px;">Boiler flow</div><div class="grp" style="left:219.5px;top:785.2px;width:150px;height:75.4px"></div><div class="t" style="left:223.4px;top:796.9399999999999px;font-size:12px;line-height:13.799999999999999px;color:#000;font-weight:normal;letter-spacing:0.4px;">Manifold</div><div class="cb" style="left:327.4px;top:790.8px;width:35.4px;height:22px"><div class="ca" style="left:17.100000000000023px;width:16.799999999999955px"></div><div class="tri" style="left:22.7px;top:7.0px"></div></div><div class="t" style="left:333.7px;top:797.14px;font-size:12px;line-height:13.799999999999999px;color:#000;font-weight:normal;letter-spacing:0.4px;">1</div><div class="t" style="left:223.4px;top:822.9399999999999px;font-size:12px;line-height:13.799999999999999px;color:#000;font-weight:normal;letter-spacing:0.4px;">Loop</div><div class="t" style="left:223.4px;top:839.34px;font-size:12px;line-height:13.799999999999999px;color:#000;font-weight:normal;letter-spacing:0.4px;">manifolds</div><div class="ck ckd" style="left:294.9px;top:829.00px"></div><div class="ck" style="left:313.1px;top:829.00px"></div><div class="ck" style="left:331.1px;top:829.00px"></div><div class="ck" style="left:349px;top:829.00px"></div><div class="t" style="left:219.5px;top:868.4399999999999px;font-size:12px;line-height:13.799999999999999px;color:#000;font-weight:normal;letter-spacing:0.25px;">Sensor description</div><div class="tf" style="left:221px;top:889.2px;width:144.7px;height:23.3px"></div><div class="t" style="left:225.3px;top:895.54px;font-size:12px;line-height:13.799999999999999px;color:#000;font-weight:normal;letter-spacing:0.4px;">Boiler</div><div class="ck" style="left:221px;top:926.90px"></div><div class="t" style="left:241.2px;top:928.64px;font-size:12px;line-height:13.799999999999999px;color:#000;font-weight:normal;letter-spacing:0.2px;">Temp. return limit.</div><div class="t" style="left:219.5px;top:956.14px;font-size:12px;line-height:13.799999999999999px;color:#000;font-weight:normal;letter-spacing:0.4px;">Contr.</div><div class="cb" style="left:267.6px;top:950.9px;width:98.8px;height:20.8px"><div class="ca" style="left:80.89999999999998px;width:16.400000000000034px"></div><div class="tri" style="left:86.3px;top:6.4px"></div></div><div class="t" style="left:272.8px;top:956.4399999999999px;font-size:12px;line-height:13.799999999999999px;color:#000;font-weight:normal;letter-spacing:0.15px;">Single stage</div><div class="grp" style="left:395.4px;top:785px;width:161px;height:200px"></div><div class="t" style="left:399.3px;top:792.14px;font-size:12px;line-height:13.799999999999999px;color:#000;font-weight:normal;letter-spacing:0.2px;">Boiler description</div><div class="tf" style="left:401.5px;top:812.2px;width:147.3px;height:23.2px"></div><div class="t" style="left:405.4px;top:819.14px;font-size:12px;line-height:13.799999999999999px;color:#000;font-weight:normal;letter-spacing:0.4px;">Boiler 2</div><div class="t" style="left:399.3px;top:855.4399999999999px;font-size:12px;line-height:13.799999999999999px;color:#000;font-weight:normal;letter-spacing:0.4px;">Type</div><div class="cb" style="left:490.3px;top:850.6px;width:58.9px;height:20.8px"><div class="ca" style="left:41.80000000000001px;width:15.600000000000023px"></div><div class="tri" style="left:46.800000000000026px;top:6.4px"></div></div><div class="t" style="left:496.6px;top:856.34px;font-size:12px;line-height:13.799999999999999px;color:#000;font-weight:normal;letter-spacing:0.4px;">Base</div><div class="t" style="left:399.3px;top:886.84px;font-size:12px;line-height:13.799999999999999px;color:#000;font-weight:normal;letter-spacing:0.4px;">Flame</div><div class="cb cby" style="left:466.8px;top:881.6px;width:82.4px;height:21px"><div class="ca" style="left:65.30000000000001px;width:15.600000000000023px"></div><div class="tri" style="left:70.30000000000003px;top:6.5px"></div></div><div class="t" style="left:473.1px;top:887.44px;font-size:12px;line-height:13.799999999999999px;color:#000;font-weight:normal;letter-spacing:0.4px;">Boiler 2</div><div class="t" style="left:399.3px;top:917.84px;font-size:12px;line-height:13.799999999999999px;color:#000;font-weight:normal;letter-spacing:0.4px;">Alarm</div><div class="cb cbr" style="left:469.3px;top:912.3px;width:79.9px;height:21.3px"><div class="ca" style="left:62.80000000000001px;width:15.600000000000023px"></div><div class="tri" style="left:67.80000000000003px;top:6.65px"></div></div><div class="t" style="left:475.6px;top:918.29px;font-size:12px;line-height:13.799999999999999px;color:#000;font-weight:normal;letter-spacing:0.4px;">Boiler ...</div><div class="grp" style="left:399.3px;top:946.6px;width:153.2px;height:60px"></div><div class="ck" style="left:405.2px;top:951.80px"></div><div class="t" style="left:425.3px;top:954.04px;font-size:12px;line-height:13.799999999999999px;color:#000;font-weight:normal;letter-spacing:0.08px;">Anti-condensation circ.</div><div class="t" style="left:592.3px;top:583.14px;font-size:12px;line-height:13.799999999999999px;color:#000;font-weight:normal;letter-spacing:0.4px;">Supply descr.</div><div class="tf" style="left:594.2px;top:603.2px;width:151.5px;height:23.4px"></div><div class="t" style="left:598px;top:609.84px;font-size:12px;line-height:13.799999999999999px;color:#000;font-weight:normal;letter-spacing:0.4px;">Zone 1</div><div class="grp" style="left:592.3px;top:644.4px;width:158px;height:75.6px"></div><div class="t" style="left:596.4px;top:655.9399999999999px;font-size:12px;line-height:13.799999999999999px;color:#000;font-weight:normal;letter-spacing:0.4px;">Manifold</div><div class="cb" style="left:707.4px;top:649.8px;width:35.6px;height:21.8px"><div class="ca" style="left:16.700000000000045px;width:17.399999999999977px"></div><div class="tri" style="left:22.600000000000033px;top:6.9px"></div></div><div class="t" style="left:713.6999999999999px;top:656.04px;font-size:12px;line-height:13.799999999999999px;color:#000;font-weight:normal;letter-spacing:0.4px;">1</div><div class="t" style="left:596.4px;top:681.84px;font-size:12px;line-height:13.799999999999999px;color:#000;font-weight:normal;letter-spacing:0.4px;">Loop</div><div class="t" style="left:596.4px;top:698.14px;font-size:12px;line-height:13.799999999999999px;color:#000;font-weight:normal;letter-spacing:0.4px;">manifolds</div><div class="ck ckd" style="left:675.3px;top:687.60px"></div><div class="ck" style="left:693px;top:687.60px"></div><div class="ck" style="left:711px;top:687.60px"></div><div class="ck" style="left:729.2px;top:687.60px"></div><div class="grp" style="left:592.3px;top:730.2px;width:158px;height:300px"></div><div class="t" style="left:596.4px;top:742.14px;font-size:12px;line-height:13.799999999999999px;color:#000;font-weight:normal;letter-spacing:0.4px;">Utility</div><div class="cb" style="left:665px;top:736px;width:77.6px;height:21.8px"><div class="ca" style="left:59.5px;width:16.600000000000023px"></div><div class="tri" style="left:65.00000000000001px;top:6.9px"></div></div><div class="t" style="left:671.3px;top:742.24px;font-size:12px;line-height:13.799999999999999px;color:#000;font-weight:normal;letter-spacing:0.4px;">Generic</div><div class="t" style="left:596.4px;top:773.14px;font-size:12px;line-height:13.799999999999999px;color:#000;font-weight:normal;letter-spacing:0.4px;">Request</div><div class="cb" style="left:650px;top:767.5px;width:93px;height:21px"><div class="ca" style="left:75.0px;width:16.5px"></div><div class="tri" style="left:80.45px;top:6.5px"></div></div><div class="t" style="left:656.3px;top:773.34px;font-size:12px;line-height:13.799999999999999px;color:#000;font-weight:normal;letter-spacing:0.4px;">Schedule</div><div class="t" style="left:596.4px;top:804.14px;font-size:12px;line-height:13.799999999999999px;color:#000;font-weight:normal;letter-spacing:0.4px;">Contr.</div><div class="cb" style="left:653.2px;top:798.5px;width:89.8px;height:21px"><div class="ca" style="left:71.79999999999995px;width:16.5px"></div><div class="tri" style="left:77.24999999999996px;top:6.5px"></div></div><div class="t" style="left:659.5px;top:804.34px;font-size:12px;line-height:13.799999999999999px;color:#000;font-weight:normal;letter-spacing:0.4px;">Climatic</div><div class="t" style="left:596.4px;top:835.14px;font-size:12px;line-height:13.799999999999999px;color:#000;font-weight:normal;letter-spacing:0.4px;">Adjust.</div><div class="cb" style="left:653.2px;top:829.4px;width:89.8px;height:21px"><div class="ca" style="left:71.79999999999995px;width:16.5px"></div><div class="tri" style="left:77.24999999999996px;top:6.5px"></div></div><div class="t" style="left:659.5px;top:835.24px;font-size:12px;line-height:13.799999999999999px;color:#000;font-weight:normal;letter-spacing:0.4px;">NO</div><div class="t" style="left:596.4px;top:860.74px;font-size:12px;line-height:13.799999999999999px;color:#000;font-weight:normal;letter-spacing:0.4px;">Hot</div><div class="t" style="left:596.4px;top:876.54px;font-size:12px;line-height:13.799999999999999px;color:#000;font-weight:normal;letter-spacing:0.4px;">cold</div><div class="cb" style="left:667px;top:860.1px;width:76px;height:27.6px"><div class="ca" style="left:58.0px;width:16.5px"></div><div class="tri" style="left:63.45px;top:9.8px"></div></div><div class="t" style="left:673.3px;top:869.24px;font-size:12px;line-height:13.799999999999999px;color:#000;font-weight:normal;letter-spacing:0.4px;">Hot</div><div class="ck ckc" style="left:598px;top:897.10px"><svg width="14" height="14" style="position:absolute;left:0;top:0"><path d="M2.2,6.4 L3.4,5.6 L5.6,8.6 L10.9,0.2 L12.6,1.2 L6.2,11.4 L5.2,11.4 Z" fill="#000"/></svg></div><div class="t" style="left:618.6px;top:898.84px;font-size:12px;line-height:13.799999999999999px;color:#000;font-weight:normal;letter-spacing:0.4px;">Climatic season</div><div class="ck ckd" style="left:598px;top:919.40px"></div><div class="t" style="left:618.6px;top:922.4399999999999px;font-size:12px;line-height:13.799999999999999px;color:#8e8f99;font-weight:normal;letter-spacing:0.4px;">Supply sensor</div><div class="ck" style="left:598px;top:942.70px"></div><div class="t" style="left:618.6px;top:945.24px;font-size:12px;line-height:13.799999999999999px;color:#000;font-weight:normal;letter-spacing:0.4px;">Return sensor</div><div class="t" style="left:596.4px;top:967.64px;font-size:12px;line-height:13.799999999999999px;color:#000;font-weight:normal;letter-spacing:0.4px;">Room</div><div class="cb" style="left:656px;top:966.4px;width:87px;height:21px"><div class="ca" style="left:69.0px;width:16.5px"></div><div class="tri" style="left:74.45px;top:6.5px"></div></div><div class="t" style="left:1164.3px;top:583.14px;font-size:12px;line-height:13.799999999999999px;color:#000;font-weight:normal;letter-spacing:0.4px;">Supply descr.</div><div class="tf" style="left:1166.2px;top:603.2px;width:151.5px;height:23.4px"></div><div class="t" style="left:1170px;top:609.84px;font-size:12px;line-height:13.799999999999999px;color:#000;font-weight:normal;letter-spacing:0.4px;">Zone 2</div><div class="grp" style="left:1164.3px;top:644.4px;width:158px;height:75.6px"></div><div class="t" style="left:1168.4px;top:655.9399999999999px;font-size:12px;line-height:13.799999999999999px;color:#000;font-weight:normal;letter-spacing:0.4px;">Manifold</div><div class="cb" style="left:1279.4px;top:649.8px;width:35.6px;height:21.8px"><div class="ca" style="left:16.699999999999818px;width:17.40000000000009px"></div><div class="tri" style="left:22.599999999999863px;top:6.9px"></div></div><div class="t" style="left:1285.7px;top:656.04px;font-size:12px;line-height:13.799999999999999px;color:#000;font-weight:normal;letter-spacing:0.4px;">1</div><div class="t" style="left:1168.4px;top:681.84px;font-size:12px;line-height:13.799999999999999px;color:#000;font-weight:normal;letter-spacing:0.4px;">Loop</div><div class="t" style="left:1168.4px;top:698.14px;font-size:12px;line-height:13.799999999999999px;color:#000;font-weight:normal;letter-spacing:0.4px;">manifolds</div><div class="ck ckd" style="left:1247.3px;top:687.60px"></div><div class="ck" style="left:1265px;top:687.60px"></div><div class="ck" style="left:1283px;top:687.60px"></div><div class="ck" style="left:1301.2px;top:687.60px"></div><div class="grp" style="left:1164.3px;top:730.2px;width:158px;height:300px"></div><div class="t" style="left:1168.4px;top:742.14px;font-size:12px;line-height:13.799999999999999px;color:#000;font-weight:normal;letter-spacing:0.4px;">Utility</div><div class="cb" style="left:1237px;top:736px;width:77.6px;height:21.8px"><div class="ca" style="left:59.5px;width:16.59999999999991px"></div><div class="tri" style="left:64.99999999999996px;top:6.9px"></div></div><div class="t" style="left:1243.3px;top:742.24px;font-size:12px;line-height:13.799999999999999px;color:#000;font-weight:normal;letter-spacing:0.4px;">Generic</div><div class="t" style="left:1168.4px;top:773.14px;font-size:12px;line-height:13.799999999999999px;color:#000;font-weight:normal;letter-spacing:0.4px;">Request</div><div class="cb" style="left:1222px;top:767.5px;width:93px;height:21px"><div class="ca" style="left:75.0px;width:16.5px"></div><div class="tri" style="left:80.45px;top:6.5px"></div></div><div class="t" style="left:1228.3px;top:773.34px;font-size:12px;line-height:13.799999999999999px;color:#000;font-weight:normal;letter-spacing:0.4px;">Schedule</div><div class="t" style="left:1168.4px;top:804.14px;font-size:12px;line-height:13.799999999999999px;color:#000;font-weight:normal;letter-spacing:0.4px;">Contr.</div><div class="cb" style="left:1225.2px;top:798.5px;width:89.8px;height:21px"><div class="ca" style="left:71.79999999999995px;width:16.5px"></div><div class="tri" style="left:77.24999999999996px;top:6.5px"></div></div><div class="t" style="left:1231.5px;top:804.34px;font-size:12px;line-height:13.799999999999999px;color:#000;font-weight:normal;letter-spacing:0.4px;">Climatic</div><div class="t" style="left:1168.4px;top:835.14px;font-size:12px;line-height:13.799999999999999px;color:#000;font-weight:normal;letter-spacing:0.4px;">Adjust.</div><div class="cb" style="left:1225.2px;top:829.4px;width:89.8px;height:21px"><div class="ca" style="left:71.79999999999995px;width:16.5px"></div><div class="tri" style="left:77.24999999999996px;top:6.5px"></div></div><div class="t" style="left:1231.5px;top:835.24px;font-size:12px;line-height:13.799999999999999px;color:#000;font-weight:normal;letter-spacing:0.4px;">NO</div><div class="t" style="left:1168.4px;top:860.74px;font-size:12px;line-height:13.799999999999999px;color:#000;font-weight:normal;letter-spacing:0.4px;">Hot</div><div class="t" style="left:1168.4px;top:876.54px;font-size:12px;line-height:13.799999999999999px;color:#000;font-weight:normal;letter-spacing:0.4px;">cold</div><div class="cb" style="left:1239px;top:860.1px;width:76px;height:27.6px"><div class="ca" style="left:58.0px;width:16.5px"></div><div class="tri" style="left:63.45px;top:9.8px"></div></div><div class="t" style="left:1245.3px;top:869.24px;font-size:12px;line-height:13.799999999999999px;color:#000;font-weight:normal;letter-spacing:0.4px;">Hot</div><div class="ck ckc" style="left:1170px;top:897.10px"><svg width="14" height="14" style="position:absolute;left:0;top:0"><path d="M2.2,6.4 L3.4,5.6 L5.6,8.6 L10.9,0.2 L12.6,1.2 L6.2,11.4 L5.2,11.4 Z" fill="#000"/></svg></div><div class="t" style="left:1190.6px;top:898.84px;font-size:12px;line-height:13.799999999999999px;color:#000;font-weight:normal;letter-spacing:0.4px;">Climatic season</div><div class="ck ckd" style="left:1170px;top:919.40px"></div><div class="t" style="left:1190.6px;top:922.4399999999999px;font-size:12px;line-height:13.799999999999999px;color:#8e8f99;font-weight:normal;letter-spacing:0.4px;">Supply sensor</div><div class="ck" style="left:1170px;top:942.70px"></div><div class="t" style="left:1190.6px;top:945.24px;font-size:12px;line-height:13.799999999999999px;color:#000;font-weight:normal;letter-spacing:0.4px;">Return sensor</div><div class="t" style="left:1168.4px;top:967.64px;font-size:12px;line-height:13.799999999999999px;color:#000;font-weight:normal;letter-spacing:0.4px;">Room</div><div class="cb" style="left:1228px;top:966.4px;width:87px;height:21px"><div class="ca" style="left:69.0px;width:16.5px"></div><div class="tri" style="left:74.45px;top:6.5px"></div></div><div class="t" style="left:1408.3px;top:583.14px;font-size:12px;line-height:13.799999999999999px;color:#000;font-weight:normal;letter-spacing:0.4px;">Supply descr.</div><div class="tf" style="left:1410.2px;top:603.2px;width:151.5px;height:23.4px"></div><div class="t" style="left:1414px;top:609.84px;font-size:12px;line-height:13.799999999999999px;color:#000;font-weight:normal;letter-spacing:0.4px;">Zone 3</div><div class="grp" style="left:1408.3px;top:644.4px;width:158px;height:75.6px"></div><div class="t" style="left:1412.4px;top:655.9399999999999px;font-size:12px;line-height:13.799999999999999px;color:#000;font-weight:normal;letter-spacing:0.4px;">Manifold</div><div class="cb" style="left:1523.4px;top:649.8px;width:35.6px;height:21.8px"><div class="ca" style="left:16.699999999999818px;width:17.40000000000009px"></div><div class="tri" style="left:22.599999999999863px;top:6.9px"></div></div><div class="t" style="left:1529.7px;top:656.04px;font-size:12px;line-height:13.799999999999999px;color:#000;font-weight:normal;letter-spacing:0.4px;">1</div><div class="t" style="left:1412.4px;top:681.84px;font-size:12px;line-height:13.799999999999999px;color:#000;font-weight:normal;letter-spacing:0.4px;">Loop</div><div class="t" style="left:1412.4px;top:698.14px;font-size:12px;line-height:13.799999999999999px;color:#000;font-weight:normal;letter-spacing:0.4px;">manifolds</div><div class="ck ckd" style="left:1491.3px;top:687.60px"></div><div class="ck" style="left:1509px;top:687.60px"></div><div class="ck" style="left:1527px;top:687.60px"></div><div class="ck" style="left:1545.2px;top:687.60px"></div><div class="grp" style="left:1408.3px;top:730.2px;width:158px;height:300px"></div><div class="t" style="left:1412.4px;top:742.14px;font-size:12px;line-height:13.799999999999999px;color:#000;font-weight:normal;letter-spacing:0.4px;">Utility</div><div class="cb" style="left:1481px;top:736px;width:77.6px;height:21.8px"><div class="ca" style="left:59.5px;width:16.59999999999991px"></div><div class="tri" style="left:64.99999999999996px;top:6.9px"></div></div><div class="t" style="left:1487.3px;top:742.24px;font-size:12px;line-height:13.799999999999999px;color:#000;font-weight:normal;letter-spacing:0.4px;">Generic</div><div class="t" style="left:1412.4px;top:773.14px;font-size:12px;line-height:13.799999999999999px;color:#000;font-weight:normal;letter-spacing:0.4px;">Request</div><div class="cb" style="left:1466px;top:767.5px;width:93px;height:21px"><div class="ca" style="left:75.0px;width:16.5px"></div><div class="tri" style="left:80.45px;top:6.5px"></div></div><div class="t" style="left:1472.3px;top:773.34px;font-size:12px;line-height:13.799999999999999px;color:#000;font-weight:normal;letter-spacing:0.4px;">Schedule</div><div class="t" style="left:1412.4px;top:804.14px;font-size:12px;line-height:13.799999999999999px;color:#000;font-weight:normal;letter-spacing:0.4px;">Contr.</div><div class="cb" style="left:1469.2px;top:798.5px;width:89.8px;height:21px"><div class="ca" style="left:71.79999999999995px;width:16.5px"></div><div class="tri" style="left:77.24999999999996px;top:6.5px"></div></div><div class="t" style="left:1475.5px;top:804.34px;font-size:12px;line-height:13.799999999999999px;color:#000;font-weight:normal;letter-spacing:0.4px;">Climatic</div><div class="t" style="left:1412.4px;top:835.14px;font-size:12px;line-height:13.799999999999999px;color:#000;font-weight:normal;letter-spacing:0.4px;">Adjust.</div><div class="cb" style="left:1469.2px;top:829.4px;width:89.8px;height:21px"><div class="ca" style="left:71.79999999999995px;width:16.5px"></div><div class="tri" style="left:77.24999999999996px;top:6.5px"></div></div><div class="t" style="left:1475.5px;top:835.24px;font-size:12px;line-height:13.799999999999999px;color:#000;font-weight:normal;letter-spacing:0.4px;">NO</div><div class="t" style="left:1412.4px;top:860.74px;font-size:12px;line-height:13.799999999999999px;color:#000;font-weight:normal;letter-spacing:0.4px;">Hot</div><div class="t" style="left:1412.4px;top:876.54px;font-size:12px;line-height:13.799999999999999px;color:#000;font-weight:normal;letter-spacing:0.4px;">cold</div><div class="cb" style="left:1483px;top:860.1px;width:76px;height:27.6px"><div class="ca" style="left:58.0px;width:16.5px"></div><div class="tri" style="left:63.45px;top:9.8px"></div></div><div class="t" style="left:1489.3px;top:869.24px;font-size:12px;line-height:13.799999999999999px;color:#000;font-weight:normal;letter-spacing:0.4px;">Hot</div><div class="ck ckc" style="left:1414px;top:897.10px"><svg width="14" height="14" style="position:absolute;left:0;top:0"><path d="M2.2,6.4 L3.4,5.6 L5.6,8.6 L10.9,0.2 L12.6,1.2 L6.2,11.4 L5.2,11.4 Z" fill="#000"/></svg></div><div class="t" style="left:1434.6px;top:898.84px;font-size:12px;line-height:13.799999999999999px;color:#000;font-weight:normal;letter-spacing:0.4px;">Climatic season</div><div class="ck ckd" style="left:1414px;top:919.40px"></div><div class="t" style="left:1434.6px;top:922.4399999999999px;font-size:12px;line-height:13.799999999999999px;color:#8e8f99;font-weight:normal;letter-spacing:0.4px;">Supply sensor</div><div class="ck" style="left:1414px;top:942.70px"></div><div class="t" style="left:1434.6px;top:945.24px;font-size:12px;line-height:13.799999999999999px;color:#000;font-weight:normal;letter-spacing:0.4px;">Return sensor</div><div class="t" style="left:1412.4px;top:967.64px;font-size:12px;line-height:13.799999999999999px;color:#000;font-weight:normal;letter-spacing:0.4px;">Room</div><div class="cb" style="left:1472px;top:966.4px;width:87px;height:21px"><div class="ca" style="left:69.0px;width:16.5px"></div><div class="tri" style="left:74.45px;top:6.5px"></div></div><div class="t" style="left:861px;top:583.14px;font-size:12px;line-height:13.799999999999999px;color:#000;font-weight:normal;letter-spacing:0.4px;">Supply descr.</div><div class="tf" style="left:861.9px;top:603.2px;width:133.7px;height:23.4px"></div><div class="t" style="left:865.7px;top:609.84px;font-size:12px;line-height:13.799999999999999px;color:#000;font-weight:normal;letter-spacing:0.4px;">DHW</div><div class="grp" style="left:860.2px;top:644.3px;width:140px;height:75.3px"></div><div class="t" style="left:864.3px;top:655.9399999999999px;font-size:12px;line-height:13.799999999999999px;color:#000;font-weight:normal;letter-spacing:0.4px;">Manifold</div><div class="cb" style="left:956.9px;top:649.8px;width:35.6px;height:21.8px"><div class="ca" style="left:16.800000000000068px;width:17.299999999999955px"></div><div class="tri" style="left:22.650000000000045px;top:6.9px"></div></div><div class="t" style="left:963.1999999999999px;top:656.04px;font-size:12px;line-height:13.799999999999999px;color:#000;font-weight:normal;letter-spacing:0.4px;">1</div><div class="t" style="left:864.3px;top:681.84px;font-size:12px;line-height:13.799999999999999px;color:#000;font-weight:normal;letter-spacing:0.4px;">Loop</div><div class="t" style="left:864.3px;top:698.14px;font-size:12px;line-height:13.799999999999999px;color:#000;font-weight:normal;letter-spacing:0.4px;">manifolds</div><div class="ck ckd" style="left:926.2px;top:687.60px"></div><div class="ck" style="left:944.2px;top:687.60px"></div><div class="ck" style="left:962.2px;top:687.60px"></div><div class="ck" style="left:980.2px;top:687.60px"></div><div class="ck" style="left:861.9px;top:727.10px"></div><div class="t" style="left:882.3px;top:728.9399999999999px;font-size:12px;line-height:13.799999999999999px;color:#000;font-weight:normal;letter-spacing:0.1px;">Boiler priority</div><div class="grp" style="left:860px;top:753px;width:139.5px;height:31px"></div><div class="ck" style="left:865.9px;top:759.40px"></div><div class="t" style="left:886.2px;top:761.14px;font-size:12px;line-height:13.799999999999999px;color:#000;font-weight:normal;letter-spacing:0.4px;">Enable</div><div class="grp" style="left:860px;top:794px;width:140px;height:31px"></div><div class="ck" style="left:865.9px;top:800.40px"></div><div class="t" style="left:886.2px;top:802.24px;font-size:12px;line-height:13.799999999999999px;color:#000;font-weight:normal;letter-spacing:0.25px;">Anti-legionellosis</div><div class="grp" style="left:860px;top:830.3px;width:140px;height:44.8px"></div><div class="ck" style="left:865.9px;top:843.20px"></div><div class="t" style="left:886.2px;top:837.34px;font-size:12px;line-height:13.799999999999999px;color:#000;font-weight:normal;letter-spacing:0.4px;">DHW</div><div class="t" style="left:886.2px;top:852.74px;font-size:12px;line-height:13.799999999999999px;color:#000;font-weight:normal;letter-spacing:0.2px;">external command</div><div class="grp" style="left:860px;top:880px;width:140px;height:31px"></div><div class="ck" style="left:865.9px;top:886.30px"></div><div class="t" style="left:886.2px;top:888.14px;font-size:12px;line-height:13.799999999999999px;color:#000;font-weight:normal;letter-spacing:0.1px;">Primary circ.</div><div class="grp" style="left:860px;top:916px;width:140px;height:100px"></div><div class="ck ckc" style="left:865.9px;top:922.00px"><svg width="14" height="14" style="position:absolute;left:0;top:0"><path d="M2.2,6.4 L3.4,5.6 L5.6,8.6 L10.9,0.2 L12.6,1.2 L6.2,11.4 L5.2,11.4 Z" fill="#000"/></svg></div><div class="t" style="left:886.2px;top:923.84px;font-size:12px;line-height:13.799999999999999px;color:#000;font-weight:normal;letter-spacing:0.4px;">Circ. load</div><div class="t" style="left:864.5px;top:951.14px;font-size:12px;line-height:13.799999999999999px;color:#000;font-weight:normal;letter-spacing:0.4px;">Type</div><div class="cb" style="left:910.3px;top:945px;width:82.5px;height:21px"><div class="ca" style="left:64.60000000000002px;width:16.399999999999977px"></div><div class="tri" style="left:70.00000000000001px;top:6.5px"></div></div><div class="t" style="left:916.5999999999999px;top:950.84px;font-size:12px;line-height:13.799999999999999px;color:#000;font-weight:normal;letter-spacing:0.4px;">Single</div>
</div>
<div style="position:absolute;left:1902px;top:95px;width:15px;height:877px;background:linear-gradient(90deg,#9aa0a8,#c8ccd2 30%,#d6d9de 60%,#d3d6dc)"></div><div style="position:absolute;left:1902px;top:94px;width:16px;height:18px;border:1px solid #a3a8b0;border-bottom:none;background:linear-gradient(90deg,#dcdee2,#eef0f2 50%,#e3e5e8)"></div><div style="position:absolute;left:1906px;top:100px;width:0;height:0;border-left:3.5px solid transparent;border-right:3.5px solid transparent;border-bottom:6px solid #3f3f3f"></div><div style="position:absolute;left:1902px;top:112px;width:16px;height:147px;border:1.3px solid #1f3a55;border-left:none;border-radius:0 14px 14px 0 / 0 16px 16px 0;background:linear-gradient(90deg,#a9bfd3,#cfe0ef 25%,#e4eff8 60%,#d2e3f2 85%,#b6cadc)"></div><div style="position:absolute;left:1902px;top:946px;width:15px;height:9px;background:linear-gradient(90deg,#dcdee2,#eef0f2 50%,#e3e5e8)"></div><div style="position:absolute;left:1902px;top:925px;width:15px;height:30px;background:linear-gradient(rgba(50,56,62,0) 45%,rgba(50,56,62,0.55) 85%,rgba(40,46,52,0.9) 100%),linear-gradient(90deg,#9aa0a8,#c8ccd2 30%,#d6d9de 60%,#d3d6dc);border-radius:0 0 9px 0 / 0 0 9px 0"></div><div style="position:absolute;left:1902px;top:955px;width:15px;height:17px;background:linear-gradient(90deg,#d8dbe0,#f4f5f6 50%,#e3e5e8)"></div><div style="position:absolute;left:1906px;top:960px;width:0;height:0;border-left:4px solid transparent;border-right:4px solid transparent;border-top:7px solid #3a3a3a"></div><div style="position:absolute;left:1917px;top:95px;width:2px;height:888px;background:#d6d9df"></div><div style="position:absolute;left:1918px;top:95px;width:1px;height:888px;background:#b5bac1"></div><div style="position:absolute;left:3px;top:972px;width:1899px;height:11px;background:linear-gradient(#7f858d,#b7bbc2 20%,#cfd2d8 60%,#d6d9de)"></div><div style="position:absolute;left:3px;top:972px;width:17px;height:11px;background:linear-gradient(#d0d3d8,#eceef0 40%,#e4e6e9)"></div><div style="position:absolute;left:8px;top:976px;width:0;height:0;border-top:4px solid transparent;border-bottom:4px solid transparent;border-right:7px solid #3a3a3a"></div><div style="position:absolute;left:20px;top:972px;width:353px;height:14px;border:1px solid #1e3246;border-bottom:none;border-top:none;border-radius:9px 9px 0 0 / 14px 14px 0 0;background:linear-gradient(#f8fbfd,#c2d4e4 40%,#a9c0d6 60%,#c6dbee)"></div><div style="position:absolute;left:1855px;top:972px;width:30px;height:11px;background:linear-gradient(90deg,rgba(50,56,62,0) 45%,rgba(50,56,62,0.55) 85%,rgba(40,46,52,0.9) 100%),linear-gradient(#7f858d,#b7bbc2 20%,#cfd2d8 60%,#d6d9de);border-radius:0 0 6px 0 / 0 0 11px 0"></div><div style="position:absolute;left:1885px;top:972px;width:16px;height:11px;background:linear-gradient(#d0d3d8,#eceef0 40%,#e4e6e9)"></div><div style="position:absolute;left:1890px;top:976px;width:0;height:0;border-top:4px solid transparent;border-bottom:4px solid transparent;border-left:7px solid #3a3a3a"></div><div style="position:absolute;left:1902px;top:972px;width:15px;height:11px;background:#d6d9df"></div><div style="position:absolute;left:0;top:0;width:1px;height:983px;background:#2e3c3e"></div>
</body></html>
